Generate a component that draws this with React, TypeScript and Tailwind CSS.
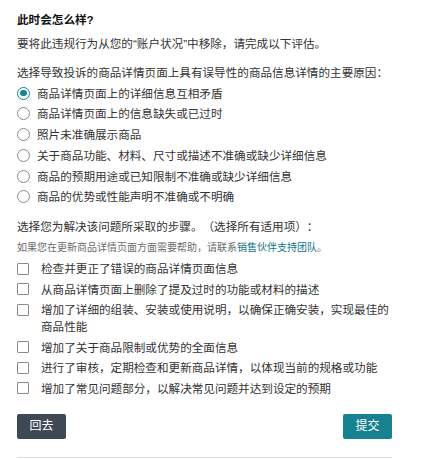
import React from "react";

const radios = [
  "商品详情页面上的详细信息互相矛盾",
  "商品详情页面上的信息缺失或已过时",
  "照片未准确展示商品",
  "关于商品功能、材料、尺寸或描述不准确或缺少详细信息",
  "商品的预期用途或已知限制不准确或缺少详细信息",
  "商品的优势或性能声明不准确或不明确",
];

const checks = [
  "检查并更正了错误的商品详情页面信息",
  "从商品详情页面上删除了提及过时的功能或材料的描述",
  "增加了详细的组装、安装或使用说明，以确保正确安装，实现最佳的商品性能",
  "增加了关于商品限制或优势的全面信息",
  "进行了审核，定期检查和更新商品详情，以体现当前的规格或功能",
  "增加了常见问题部分，以解决常见问题并达到设定的预期",
];

export default function App() {
  return (
    <div
      className="w-[421px] h-[459px] bg-white overflow-hidden text-[#333333] [text-spacing-trim:space-all]"
      style={{ fontFamily: '"Liberation Sans", "Noto Sans CJK SC", sans-serif' }}
    >
      <div className="w-[375px] ml-[17px] pt-[11px] text-[11.6px] leading-[17px]">
        <div className="font-bold text-[#111111]">此时会怎么样?</div>
        <div className="mt-[6.5px]">要将此违规行为从您的“账户状况”中移除，请完成以下评估。</div>
        <div className="mt-[12.5px]">选择导致投诉的商品详情页面上具有误导性的商品信息详情的主要原因：</div>
        <div className="mt-[3.5px] flex flex-col gap-[3.8px]">
          {radios.map((r, i) => (
            <div key={i} className="flex items-center">
              {i === 0 ? (
                <span className="w-[13px] h-[13px] rounded-full border-[1.5px] border-[#1a8294] flex items-center justify-center shrink-0">
                  <span className="w-[6.5px] h-[6.5px] rounded-full bg-[#1a8294]" />
                </span>
              ) : (
                <span className="w-[13px] h-[13px] rounded-full border border-[#8a8a8a] shrink-0" />
              )}
              <span className="ml-[7px]">{r}</span>
            </div>
          ))}
        </div>
        <div className="mt-[13px]">选择您为解决该问题所采取的步骤。（选择所有适用项）：</div>
        <div className="mt-[5.5px] text-[10px] leading-[14px] text-[#6b6b6b]">
          如果您在更新商品详情页面方面需要帮助，请联系<span className="text-[#0f7386]">销售伙伴支持团队</span>。
        </div>
        <div className="mt-[5.5px] flex flex-col gap-[3.5px]">
          {checks.map((c, i) => (
            <div key={i} className="flex items-start">
              <span className="mt-[2.5px] w-[12px] h-[12px] border border-[#8a8a8a] rounded-[1px] shrink-0" />
              <span className="ml-[12px]">{c}</span>
            </div>
          ))}
        </div>
        <div className="mt-[17.5px] flex justify-between">
          <button className="h-[25px] w-[49px] rounded-[2px] bg-[#3f4956] text-white text-[12px] leading-[25px]">
            回去
          </button>
          <button className="h-[25px] w-[49px] rounded-[2px] bg-[#16818f] text-white text-[12px] leading-[25px]">
            提交
          </button>
        </div>
        <div className="mt-[17.5px] h-px bg-[#dddddd]" />
      </div>
    </div>
  );
}
